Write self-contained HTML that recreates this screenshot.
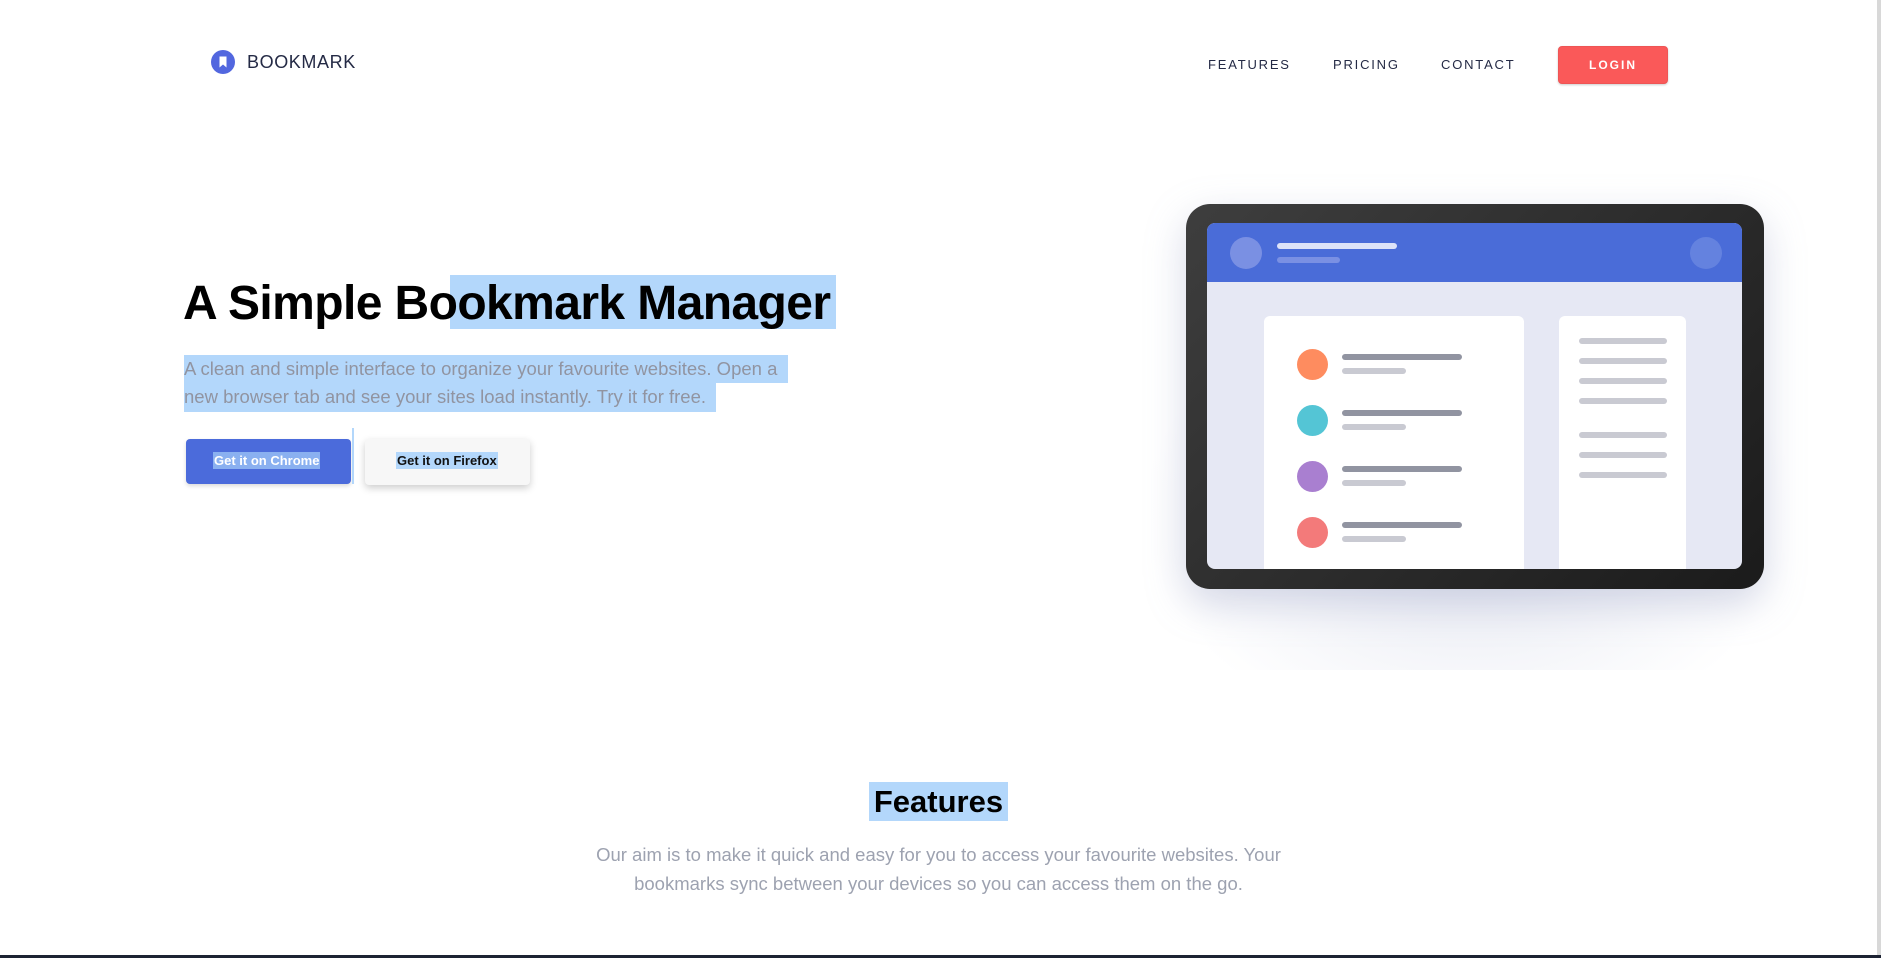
<!DOCTYPE html>
<html><head><meta charset="utf-8"><style>
*{margin:0;padding:0;box-sizing:border-box}
body{width:1881px;height:958px;overflow:hidden;background:#fff;font-family:"Liberation Sans",sans-serif;position:relative}
.a{position:absolute}
.nav{font-size:13px;letter-spacing:1.8px;color:#242a45;top:57px}
.hl{background:#b3d7fb}
.bar{position:absolute;height:6px;border-radius:3px}
.dk{background:#9194a1}.lt{background:#c9cad2}
.dot{position:absolute;width:31px;height:31px;border-radius:50%}
</style></head><body>
<svg class="a" style="left:211px;top:50px" width="24" height="24" viewBox="0 0 24 24"><circle cx="12" cy="12" r="12" fill="#5267df"/><path d="M8.5 6.5h7v11l-3.5-3-3.5 3z" fill="#fff"/></svg>
<div class="a" style="left:247px;top:52px;font-size:18px;letter-spacing:0.6px;color:#242a45;font-weight:500">BOOKMARK</div>
<div class="a nav" style="left:1208px">FEATURES</div>
<div class="a nav" style="left:1333px">PRICING</div>
<div class="a nav" style="left:1441px">CONTACT</div>
<div class="a" style="left:1558px;top:46px;width:110px;height:38px;background:#fa5959;border-radius:4px;border:1px solid #e55;color:#fff;font-size:12px;font-weight:bold;letter-spacing:2px;text-align:center;line-height:36px;box-shadow:0 1px 2px rgba(0,0,0,.2)">LOGIN</div>

<div class="a hl" style="left:450px;top:275px;width:386px;height:54px"></div>
<div class="a" style="left:183px;top:276px;font-size:48px;font-weight:bold;color:#000;letter-spacing:-0.6px;white-space:nowrap">A Simple Bookmark Manager</div>
<div class="a hl" style="left:184px;top:355px;width:604px;height:28px"></div>
<div class="a hl" style="left:184px;top:383px;width:532px;height:29px"></div>
<div class="a" style="left:184px;top:355px;font-size:18.5px;line-height:28px;color:#9194a1;white-space:nowrap">A clean and simple interface to organize your favourite websites. Open a<br>new browser tab and see your sites load instantly. Try it for free.</div>
<div class="a" style="left:186px;top:439px;width:165px;height:45px;background:#4b6bdb;border-radius:4px;box-shadow:0 2px 4px rgba(0,0,0,.15)"></div>
<div class="a" style="left:213px;top:452px;font-size:13px;font-weight:bold;color:#fff;background:#8ab0f0;padding:1px 1px">Get it on Chrome</div>
<div class="a" style="left:352px;top:428px;width:2px;height:56px;background:#b3d7fb"></div>
<div class="a" style="left:365px;top:439px;width:165px;height:46px;background:#f7f7f7;border-radius:4px;box-shadow:0 3px 8px rgba(0,0,0,.2)"></div>
<div class="a" style="left:396px;top:452px;font-size:13px;font-weight:bold;color:#111;background:#b3d7fb;padding:1px 1px">Get it on Firefox</div>

<div class="a" style="left:1140px;top:280px;width:660px;height:390px;background:radial-gradient(ellipse at 50% 60%,rgba(200,205,225,.5),rgba(255,255,255,0) 70%)"></div>
<div class="a" style="left:1186px;top:204px;width:578px;height:385px;border-radius:24px;background:linear-gradient(135deg,#3e3e3e,#1b1b1b);box-shadow:0 14px 40px rgba(140,150,190,.35)"></div>
<div class="a" style="left:1207px;top:223px;width:535px;height:346px;border-radius:8px;background:#e6e8f4;overflow:hidden">
 <div class="a" style="left:0;top:0;width:535px;height:59px;background:#4a6cd8"></div>
 <div class="a" style="left:23px;top:14px;width:32px;height:32px;border-radius:50%;background:#7a90e3"></div>
 <div class="bar" style="left:70px;top:20px;width:120px;background:#dde3f8"></div>
 <div class="bar" style="left:70px;top:34px;width:63px;background:#7a90e3"></div>
 <div class="a" style="left:483px;top:14px;width:32px;height:32px;border-radius:50%;background:#6482df"></div>
 <div class="a" style="left:57px;top:93px;width:260px;height:270px;background:#fff;border-radius:6px"></div>
 <div class="a" style="left:352px;top:93px;width:127px;height:270px;background:#fff;border-radius:6px"></div>
</div>
<div class="dot" style="left:1297px;top:349px;background:#fe8c5f"></div>
<div class="dot" style="left:1297px;top:405px;background:#54c5d5"></div>
<div class="dot" style="left:1297px;top:461px;background:#a97fd0"></div>
<div class="dot" style="left:1297px;top:517px;background:#f37a7a"></div>
<div class="bar dk" style="left:1342px;top:354px;width:120px"></div><div class="bar lt" style="left:1342px;top:368px;width:64px"></div>
<div class="bar dk" style="left:1342px;top:410px;width:120px"></div><div class="bar lt" style="left:1342px;top:424px;width:64px"></div>
<div class="bar dk" style="left:1342px;top:466px;width:120px"></div><div class="bar lt" style="left:1342px;top:480px;width:64px"></div>
<div class="bar dk" style="left:1342px;top:522px;width:120px"></div><div class="bar lt" style="left:1342px;top:536px;width:64px"></div>
<div class="bar lt" style="left:1579px;top:338px;width:88px"></div>
<div class="bar lt" style="left:1579px;top:358px;width:88px"></div>
<div class="bar lt" style="left:1579px;top:378px;width:88px"></div>
<div class="bar lt" style="left:1579px;top:398px;width:88px"></div>
<div class="bar lt" style="left:1579px;top:432px;width:88px"></div>
<div class="bar lt" style="left:1579px;top:452px;width:88px"></div>
<div class="bar lt" style="left:1579px;top:472px;width:88px"></div>

<div class="a hl" style="left:869px;top:782px;width:139px;height:39px"></div>
<div class="a" style="left:0;top:782px;width:1877px;text-align:center;font-size:31px;font-weight:bold;color:#000;line-height:39px">Features</div>
<div class="a" style="left:0;top:840px;width:1877px;text-align:center;font-size:18.5px;line-height:29px;color:#9da2b0">Our aim is to make it quick and easy for you to access your favourite websites. Your<br>bookmarks sync between your devices so you can access them on the go.</div>
<div class="a" style="left:1877px;top:0;width:4px;height:958px;background:#d8d8d8"></div>
<div class="a" style="left:0;top:955px;width:1881px;height:3px;background:#1d2333"></div>
</body></html>
